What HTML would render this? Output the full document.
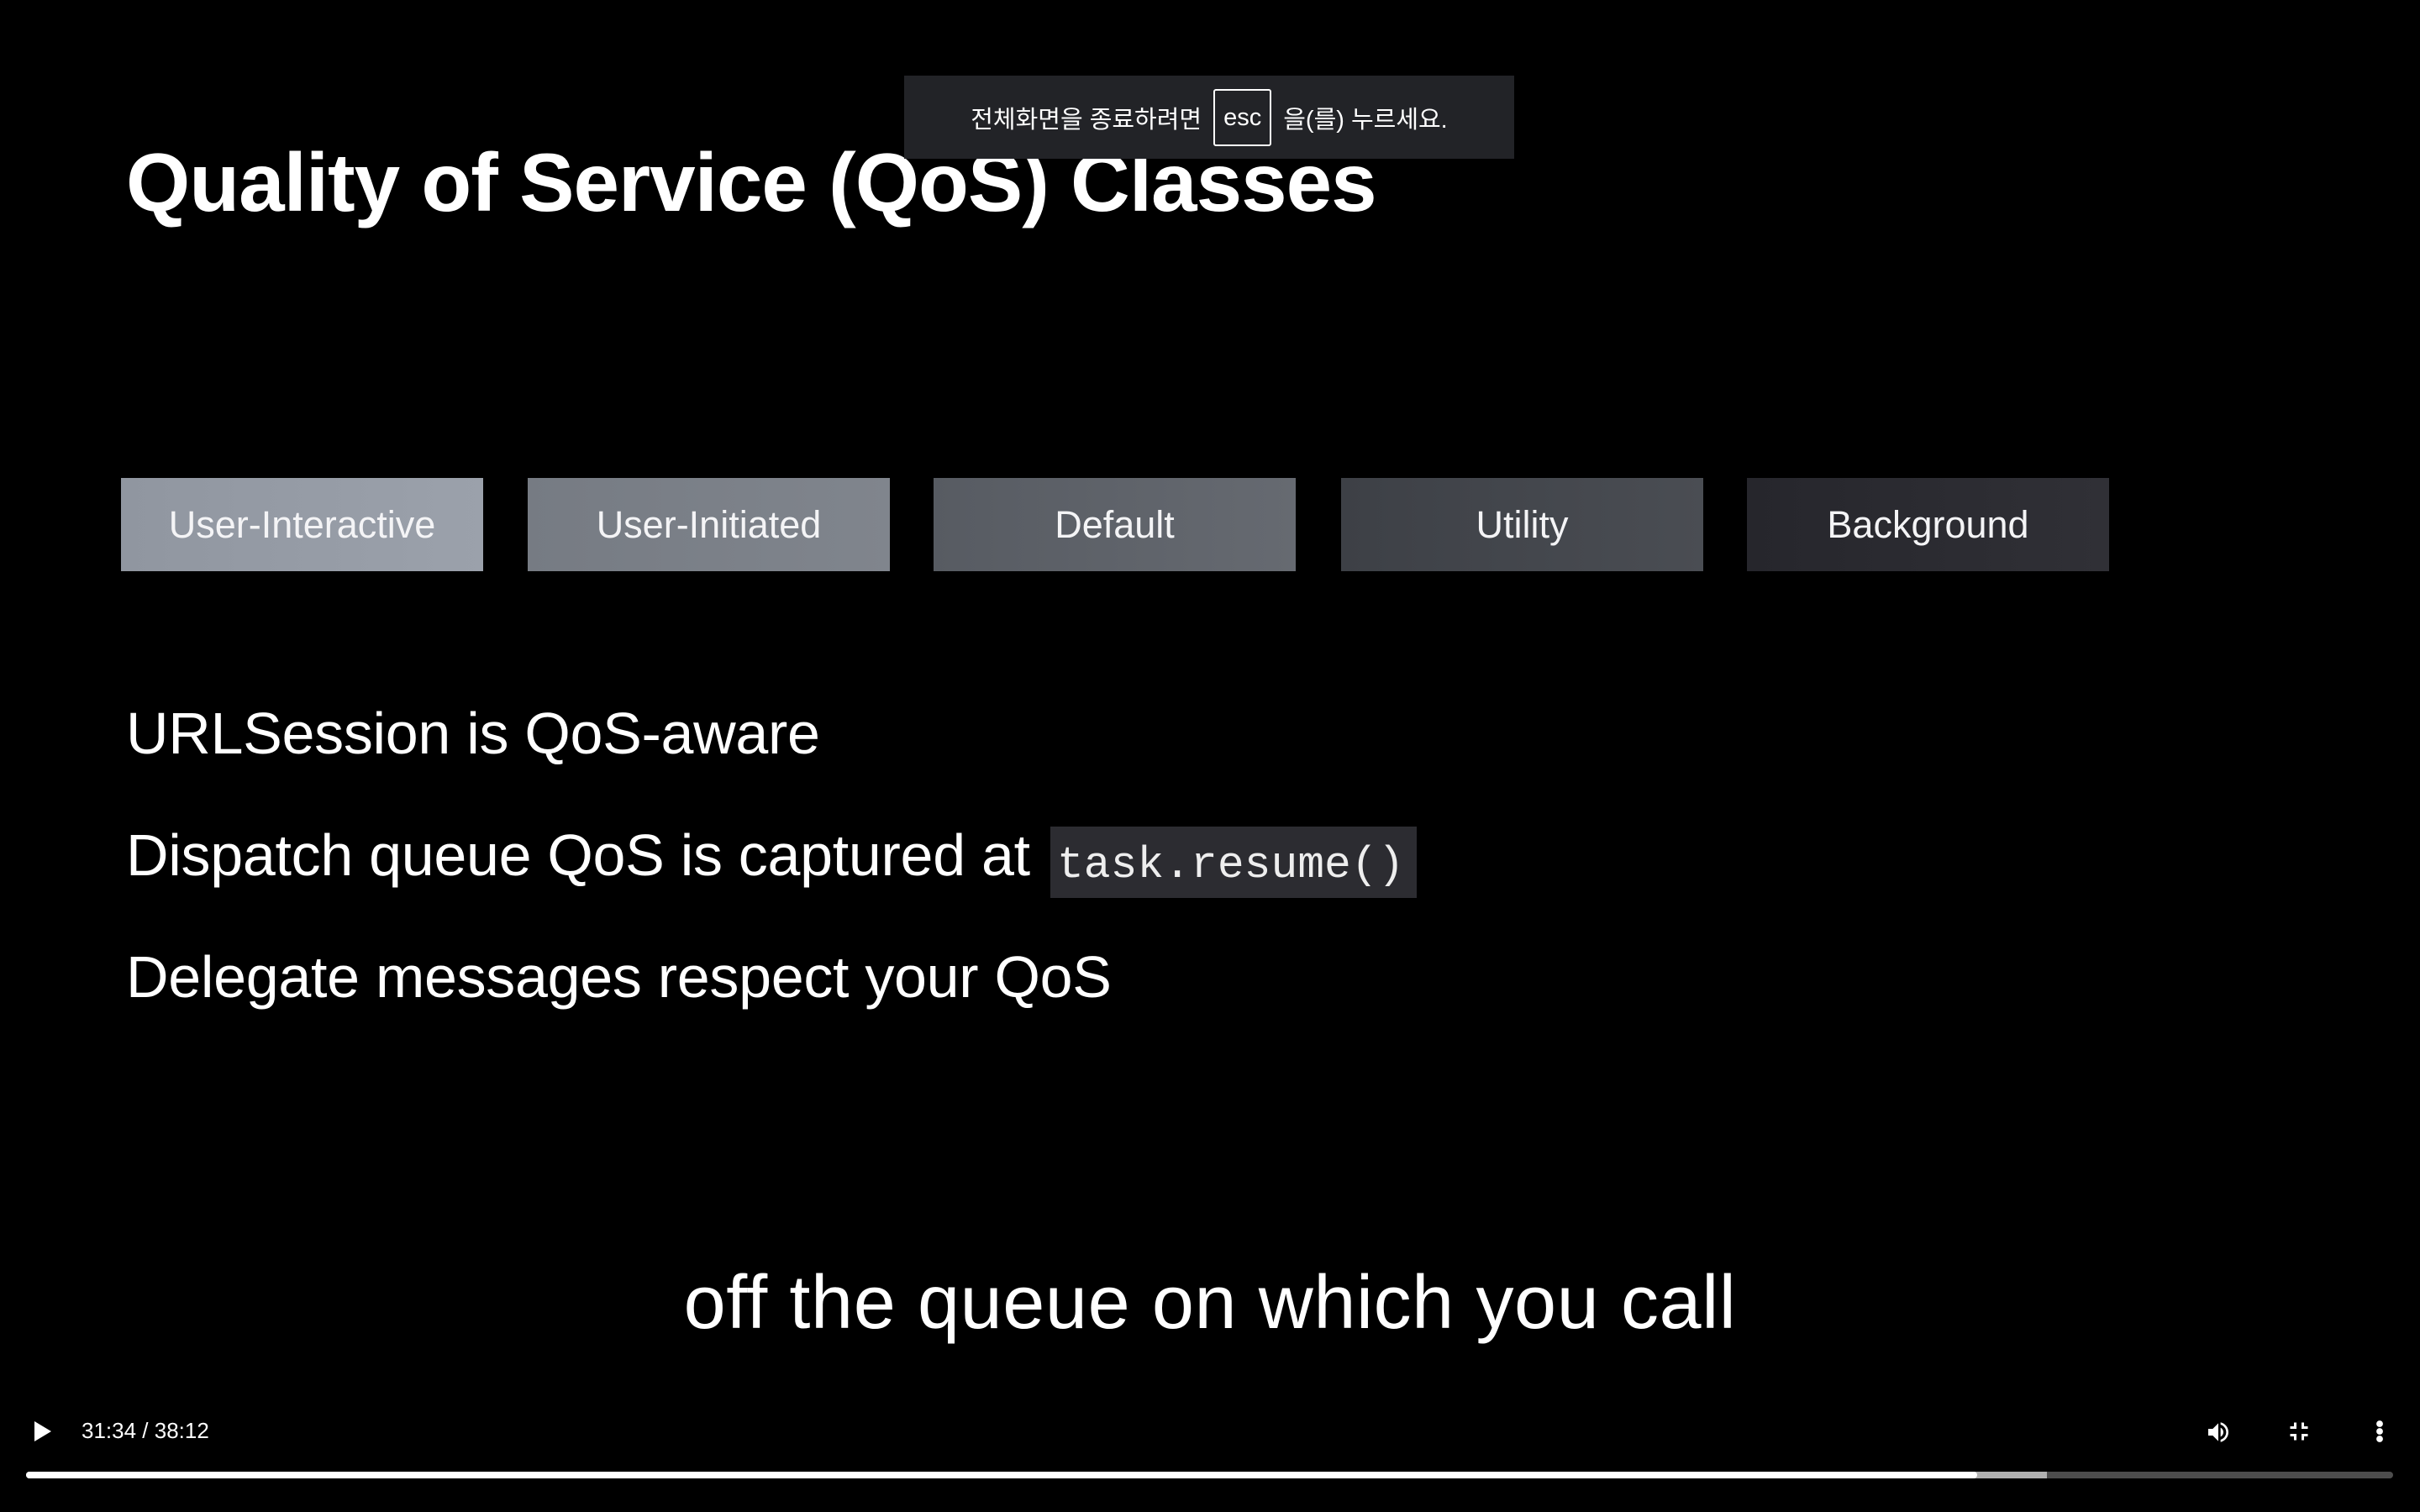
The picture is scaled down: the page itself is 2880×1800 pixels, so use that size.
<!DOCTYPE html>
<html><head><meta charset="utf-8"><style>
html,body{margin:0;padding:0;background:#000;width:2880px;height:1800px;overflow:hidden;position:relative;font-family:"Liberation Sans","Noto Sans CJK KR",sans-serif;color:#fff}
.a{position:absolute;white-space:nowrap}
.title{left:150px;top:168px;font-size:98px;font-weight:bold;letter-spacing:-1px;line-height:1}
.box{position:absolute;top:569px;width:431px;height:111px;display:flex;align-items:center;justify-content:center;font-size:45px;color:#f4f4f6}
.b{font-size:70px;left:150px;line-height:1;letter-spacing:-0.3px}
.code{position:absolute;left:1250px;top:984px;width:436px;height:85px;background:#2c2c31}
.ct{left:1258px;top:1000px;font-family:"Liberation Mono","DejaVu Sans Mono",monospace;font-size:53px;color:#eee;letter-spacing:0}
.toast{position:absolute;left:1076px;top:90px;width:726px;height:99px;background:#222327;font-size:29px;display:flex;align-items:center;justify-content:center}
.esc{display:inline-block;border:2px solid #fff;border-radius:3px;padding:0 10px;height:64px;line-height:64px;margin:0 14px;font-size:29px}
</style></head><body>
<div class="a title">Quality of Service (QoS) Classes</div>
<div class="toast"><span>전체화면을 종료하려면</span><span class="esc">esc</span><span>을(를) 누르세요.</span></div>
<div class="box" style="left:144px;background:linear-gradient(90deg,#9096a0,#9ba1ab)">User-Interactive</div>
<div class="box" style="left:628px;background:linear-gradient(90deg,#767b83,#80858d)">User-Initiated</div>
<div class="box" style="left:1111px;background:linear-gradient(90deg,#575b62,#666a71)">Default</div>
<div class="box" style="left:1596px;background:linear-gradient(90deg,#3d4046,#4a4d53)">Utility</div>
<div class="box" style="left:2079px;background:linear-gradient(90deg,#26262c,#303036)">Background</div>
<div class="a b" style="top:838px">URLSession is QoS-aware</div>
<div class="a b" style="top:983px">Dispatch queue QoS is captured at</div>
<div class="code"></div>
<div class="a ct">task.resume()</div>
<div class="a b" style="top:1128px">Delegate messages respect your QoS</div>
<div class="a" style="left:0;width:2880px;text-align:center;top:1500px;font-size:90px;font-weight:300;letter-spacing:0.6px">off the queue on which you call</div>
<svg class="a" style="left:41px;top:1692px" width="20" height="24"><path d="M0 0L20 12L0 24Z" fill="#fff"/></svg>
<div class="a" style="left:97px;top:1688px;font-size:26px">31:34 / 38:12</div>
<svg class="a" style="left:2622px;top:1689px" width="36" height="32" viewBox="0 0 24 24"><path fill="#fff" d="M3 9v6h4l5 5V4L7 9H3zm13.5 3c0-1.770-1.02-3.29-2.5-4.03v8.05c1.48-.73 2.5-2.25 2.5-4.02zM14 3.23v2.06c2.89.86 5 3.540 5 6.71s-2.11 5.85-5 6.71v2.06c4.010-.91 7-4.49 7-8.77s-2.99-7.86-7-8.77z"/></svg>
<svg class="a" style="left:2718px;top:1686px" width="36" height="36" viewBox="0 0 24 24"><path fill="#fff" d="M5 16h3v3h2v-5H5v2zm3-8H5v2h5V5H8v3zm6 11h2v-3h3v-2h-5v5zm2-11V5h-2v5h5V8h-3z"/></svg>
<svg class="a" style="left:2820px;top:1686px" width="24" height="36" viewBox="0 0 16 24"><circle cx="8" cy="6" r="2.6" fill="#fff"/><circle cx="8" cy="12" r="2.6" fill="#fff"/><circle cx="8" cy="18" r="2.6" fill="#fff"/></svg>
<div class="a" style="left:31px;top:1752px;width:2817px;height:8px;border-radius:4px;background:#4d4d4d"></div>
<div class="a" style="left:31px;top:1752px;width:2405px;height:8px;border-radius:4px 0 0 4px;background:#b0b0b0"></div>
<div class="a" style="left:31px;top:1752px;width:2322px;height:8px;border-radius:4px;background:#fff"></div>
</body></html>
